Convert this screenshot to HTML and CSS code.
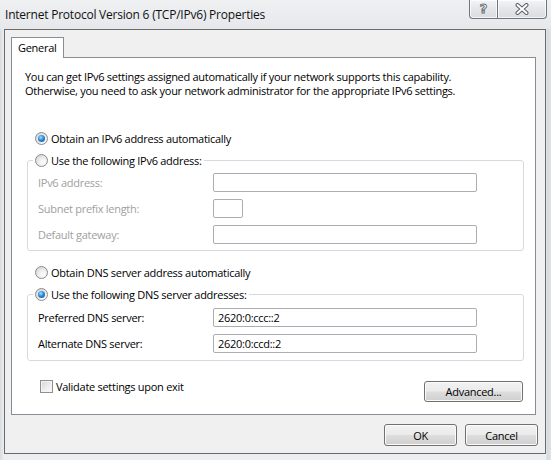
FILE: index.html
```html
<!DOCTYPE html>
<html>
<head>
<meta charset="utf-8">
<link rel="stylesheet" href="styles.css">
</head>
<body>
<div class="screen">
  <div class="titlebar">
    <span class="title">Internet Protocol Version 6 (TCP/IPv6) Properties</span>
    <div class="caption">
      <span class="cap help">?</span>
      <span class="cap close">
        <svg width="16" height="12" viewBox="0 0 16 12"><path d="M3.5 2 L12.5 10 M12.5 2 L3.5 10" stroke="#5a5e63" stroke-width="4" stroke-linecap="round" fill="none"/><path d="M3.5 2 L12.5 10 M12.5 2 L3.5 10" stroke="#ffffff" stroke-width="2" stroke-linecap="round" fill="none"/></svg>
      </span>
    </div>
  </div>
  <div class="client">
    <div class="tabs"><span class="tab">General</span></div>
    <div class="panel">
      <p class="intro">You can get IPv6 settings assigned automatically if your network supports this capability.<br>Otherwise, you need to ask your network administrator for the appropriate IPv6 settings.</p>
      <div class="opt opt-first"><span class="radio on"></span><span>Obtain an IPv6 address automatically</span></div>
      <fieldset class="group g1">
        <legend><span class="lg"><span class="radio"></span><span>Use the following IPv6 address:</span></span></legend>
        <div class="row dis"><span class="lbl">IPv6 address:</span><span class="field wide"></span></div>
        <div class="row dis"><span class="lbl">Subnet prefix length:</span><span class="field small"></span></div>
        <div class="row dis"><span class="lbl">Default gateway:</span><span class="field wide"></span></div>
      </fieldset>
      <div class="opt opt-dns"><span class="radio"></span><span>Obtain DNS server address automatically</span></div>
      <fieldset class="group g2">
        <legend><span class="lg"><span class="radio on"></span><span>Use the following DNS server addresses:</span></span></legend>
        <div class="row"><span class="lbl">Preferred DNS server:</span><span class="field wide">2620:0:ccc::2</span></div>
        <div class="row"><span class="lbl">Alternate DNS server:</span><span class="field wide">2620:0:ccd::2</span></div>
      </fieldset>
      <div class="footer">
        <div class="chk"><span class="box"></span><span>Validate settings upon exit</span></div>
        <span class="btn adv">Advanced...</span>
      </div>
    </div>
    <div class="actions">
      <span class="btn act">OK</span>
      <span class="btn act">Cancel</span>
    </div>
  </div>
</div>
</body>
</html>
```

FILE: styles.css
```css
* { box-sizing: border-box; }
html, body { margin: 0; padding: 0; }
body {
  width: 551px;
  height: 460px;
  overflow: hidden;
  font-family: "Open Sans", "Noto Sans", sans-serif;
  font-size: 11px;
  letter-spacing: -0.28px;
  color: #000;
  background: #e4e6e8;
}
.screen {
  width: 551px;
  height: 460px;
  display: flex;
  flex-direction: column;
  background: linear-gradient(90deg, #d9dcdf 0px, #eceef0 4px, #eceef0 546px, #d6d9dc 547px, #e2e4e6 551px);
}
.titlebar {
  height: 29px;
  flex: none;
  display: flex;
  align-items: flex-start;
  padding-left: 5px;
  background: linear-gradient(180deg, #eef0f2 0%, #e6e8eb 100%);
}
.title {
  font-size: 12px;
  letter-spacing: -0.22px;
  line-height: 16px;
  margin-top: 7px;
  color: #111;
}
.caption {
  margin-left: auto;
  margin-right: 4px;
  display: flex;
  height: 19px;
}
.cap {
  height: 19px;
  border: 1px solid #70757b;
  border-top: none;
  display: flex;
  align-items: center;
  justify-content: center;
  background: linear-gradient(180deg, #f3f4f6 0%, #e4e6e9 50%, #d9dce0 100%);
  box-shadow: inset 0 0 0 1px rgba(255,255,255,0.7);
}
.help {
  width: 28px;
  border-right: none;
  border-radius: 0 0 0 4px;
  font-family: "DejaVu Sans", sans-serif;
  font-weight: bold;
  font-size: 13px;
  letter-spacing: 0;
  color: #fff;
  -webkit-text-stroke: 1px #6a6e73;
  line-height: 16px;
}
.close {
  width: 50px;
  border-radius: 0 0 4px 0;
}
.client {
  margin: 0 5px 0 4px;
  height: 425px;
  flex: none;
  border: 1px solid #6a6a6a;
  background: #f0f0f0;
  display: flex;
  flex-direction: column;
}
.tabs {
  display: flex;
  padding-left: 6px;
  margin-top: 7px;
}
.tab {
  position: relative;
  z-index: 1;
  width: 53px;
  height: 21px;
  border: 1px solid #898c95;
  border-bottom: none;
  background: #fff;
  margin-bottom: -1px;
  padding-left: 6px;
  line-height: 19px;
}
.panel {
  margin: 0 9px 0 6px;
  height: 358px;
  flex: none;
  border: 1px solid #898c95;
  background: #fff;
  padding-top: 11px;
  display: flex;
  flex-direction: column;
}
.intro {
  margin: 0 0 0 13px;
  line-height: 14px;
  padding-top: 1px;
}
.opt {
  display: flex;
  align-items: center;
  height: 16px;
  margin-left: 23px;
}
.opt-first { margin-top: 32px; }
.opt-dns { margin-top: 13px; }
.radio {
  position: relative;
  flex: none;
  width: 13px;
  height: 13px;
  border-radius: 50%;
  border: 1px solid #8a8c8e;
  background: radial-gradient(circle at 65% 70%, #ffffff 0%, #ececec 45%, #c9cacb 100%);
  margin-right: 3px;
}
.radio.on::after {
  content: "";
  position: absolute;
  left: 2px;
  top: 2px;
  width: 7px;
  height: 7px;
  border-radius: 50%;
  background: radial-gradient(circle at 40% 35%, #a6e0ff 0%, #2c8ad8 45%, #0b4a92 100%);
}
.group {
  margin: 6px 11px 0 15px;
  padding: 5px 5px 6px 5px;
  border: 1px solid #d5dadf;
  border-radius: 3px;
  min-width: 0;
}
.g2 { padding-top: 6px; padding-bottom: 7px; }
legend {
  padding: 0 2px;
}
.lg {
  display: flex;
  align-items: center;
  height: 16px;
}
.row {
  display: flex;
  align-items: center;
  height: 19px;
  padding-left: 5px;
}
.row + .row { margin-top: 7px; }
.lbl {
  width: 175px;
  flex: none;
}
.dis .lbl { color: #a0a0a0; }
.field {
  height: 19px;
  border: 1px solid #abadb3;
  border-radius: 2px;
  background: #fff;
  padding-left: 4px;
  line-height: 17px;
}
.wide { width: 264px; }
.small { width: 30px; }
.footer {
  display: flex;
  align-items: flex-start;
  margin-top: 17px;
}
.chk {
  display: flex;
  align-items: center;
  height: 16px;
  margin-left: 28px;
}
.box {
  width: 13px;
  height: 13px;
  border: 1px solid #8f8f8f;
  background: linear-gradient(135deg, #d4d4d4 0%, #f0f0f0 60%, #fbfbfb 100%);
  box-shadow: inset 0 0 0 1px #f4f4f4;
  margin-right: 3px;
}
.btn {
  display: flex;
  align-items: center;
  justify-content: center;
  border: 1px solid #707070;
  border-radius: 3px;
  background: linear-gradient(180deg, #f2f2f2 0%, #ebebeb 48%, #dddddd 52%, #cfcfcf 100%);
  box-shadow: inset 0 0 0 1px #fbfbfb;
}
.adv {
  width: 99px;
  height: 21px;
  margin: 3px 12px 0 auto;
}
.actions {
  display: flex;
  justify-content: flex-end;
  gap: 8px;
  margin-top: 9px;
  padding-right: 7px;
}
.act {
  width: 73px;
  height: 22px;
}
```
